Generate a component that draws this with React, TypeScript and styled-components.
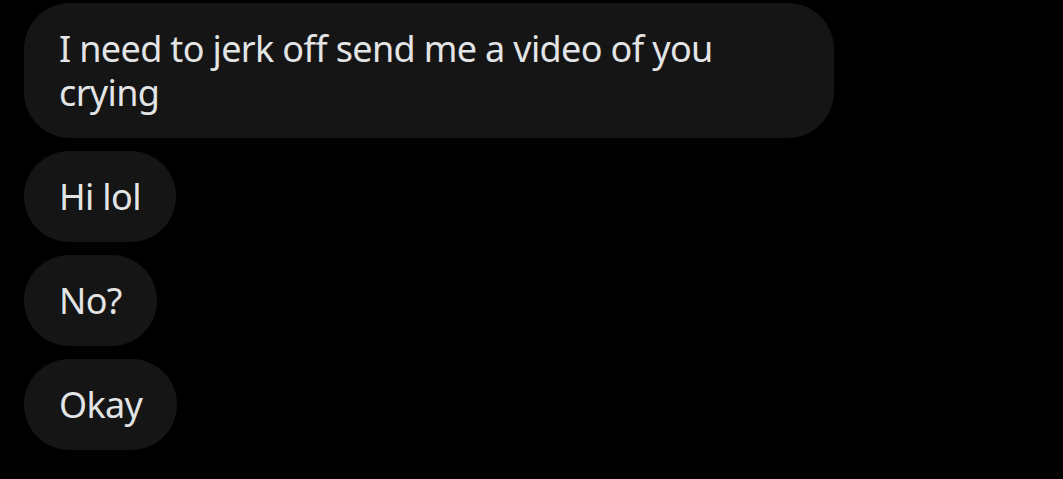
import React from "react";
import styled, { createGlobalStyle } from "styled-components";

const Global = createGlobalStyle`
  html, body { margin: 0; padding: 0; background: #000; }
  body { font-family: "Noto Sans", "Open Sans", sans-serif; }
`;

const Thread = styled.div`
  display: flex;
  flex-direction: column;
  align-items: flex-start;
  gap: 13px;
  padding: 3px 24px;
  height: 479px;
  box-sizing: border-box;
  background: #000;
`;

const Bubble = styled.div`
  max-width: 810px;
  box-sizing: border-box;
  padding: 23.5px 35px;
  background: #151515;
  color: #e3e4e5;
  border-radius: 46px;
  font-size: 36px;
  line-height: 44px;
  letter-spacing: -0.65px;
`;

const messages = [
  "I need to jerk off send me a video of you crying",
  "Hi lol",
  "No?",
  "Okay",
];

export default function App() {
  return (
    <>
      <Global />
      <Thread>
        {messages.map((m) => (
          <Bubble key={m}>{m}</Bubble>
        ))}
      </Thread>
    </>
  );
}
